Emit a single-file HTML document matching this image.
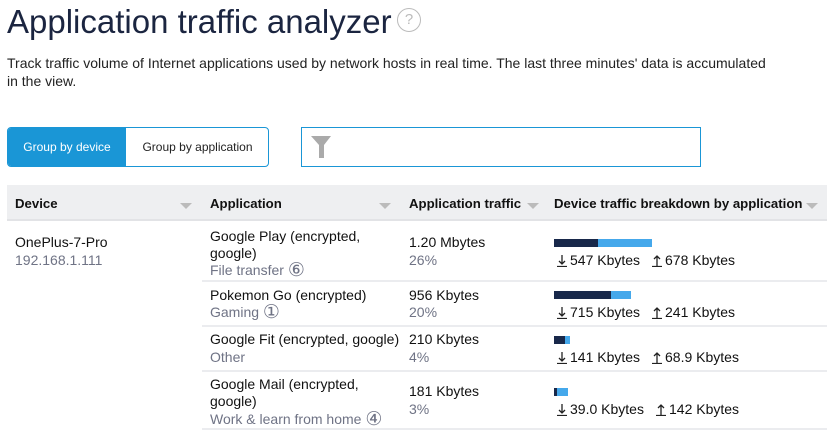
<!DOCTYPE html>
<html><head><meta charset="utf-8"><style>
*{margin:0;padding:0;box-sizing:border-box}
body{width:834px;height:434px;overflow:hidden;background:#fff;font-family:"Liberation Sans",sans-serif;color:#111;font-size:14px;position:relative}
.a{position:absolute;white-space:nowrap;line-height:17px}
.g{color:#6f7385}
.b{font-weight:bold;font-size:13.2px}
.c{font-size:19px;line-height:17px;vertical-align:-1px}
.tri{position:absolute;width:0;height:0;border-left:6px solid transparent;border-right:6px solid transparent;border-top:6px solid #bbb}
.sep{position:absolute;left:202px;width:625px;height:2px;background:#ebecef}
.bar{position:absolute;height:8px}
.d{background:#18284a}.l{background:#45a8eb}
svg.ar{vertical-align:-2px;margin-right:3px}
</style></head><body>
<div class="a" style="left:7px;top:2px;font-size:33px;line-height:40px;color:#1b2540">Application traffic analyzer</div>
<div class="a" style="left:397px;top:8px;width:24px;height:24px;border:1.5px solid #bbb;border-radius:50%;color:#bbb;font-size:15px;line-height:21px;text-align:center">?</div>
<div class="a" style="left:7px;top:54px;font-size:14px;line-height:18px;color:#222">Track traffic volume of Internet applications used by network hosts in real time. The last three minutes' data is accumulated<br>in the view.</div>
<div class="a" style="left:7px;top:127px;width:262px;height:40px;border:1px solid #1a96d6;border-radius:4px;overflow:hidden">
<div style="position:absolute;left:0;top:0;width:118px;height:38px;background:#1a96d6;color:#fff;font-size:12px;line-height:38px;text-align:center">Group by device</div>
<div style="position:absolute;left:118px;top:0;width:143px;height:38px;color:#222;font-size:12px;line-height:38px;text-align:center">Group by application</div></div>
<div class="a" style="left:301px;top:127px;width:400px;height:40px;border:1.5px solid #1a96d6">
<svg style="position:absolute;left:9px;top:8px" width="20" height="22"><path d="M0 0H20L13 9V13H8V9Z M8 13H13V22H8Z" fill="#aaa"/></svg></div>
<div class="a" style="left:7px;top:185px;width:820px;height:36px;background:#eeeff1;border-bottom:2px solid #e2e3e6"></div>
<div class="a b" style="left:15px;top:195px">Device</div>
<div class="a b" style="left:210px;top:195px">Application</div>
<div class="a b" style="left:409px;top:195px">Application traffic</div>
<div class="a b" style="left:554px;top:195px">Device traffic breakdown by application</div>
<div class="tri" style="left:180px;top:203px"></div><div class="tri" style="left:379px;top:203px"></div>
<div class="tri" style="left:527px;top:203px"></div><div class="tri" style="left:806px;top:203px"></div>
<div class="a" style="left:15px;top:234px">OnePlus-7-Pro</div>
<div class="a g" style="left:15px;top:252px">192.168.1.111</div>
<div class="a" style="left:210px;top:228px">Google Play (encrypted,<br>google)</div>
<div class="a g" style="left:210px;top:262px">File transfer <span class="c">⑥</span></div>
<div class="a" style="left:409px;top:234px">1.20 Mbytes</div><div class="a g" style="left:409px;top:252px">26%</div>
<div class="bar d" style="left:554px;top:239px;width:44px"></div><div class="bar l" style="left:598px;top:239px;width:54px"></div>
<div class="a" style="left:557px;top:252px"><svg class="ar" width="10" height="13"><path d="M5 1V10M2 7L5 10L8 7M0 12.5H10" stroke="#222" stroke-width="1.3" fill="none"/></svg>547 Kbytes</div>
<div class="a" style="left:652px;top:252px"><svg class="ar" width="10" height="13"><path d="M5 2V12M2 5L5 2L8 5M0 12.5H10" stroke="#222" stroke-width="1.3" fill="none"/></svg>678 Kbytes</div>
<div class="sep" style="top:280px"></div>
<div class="a" style="left:210px;top:287px">Pokemon Go (encrypted)</div><div class="a g" style="left:210px;top:304px">Gaming <span class="c">①</span></div>
<div class="a" style="left:409px;top:287px">956 Kbytes</div><div class="a g" style="left:409px;top:304px">20%</div>
<div class="bar d" style="left:554px;top:291px;width:57px"></div><div class="bar l" style="left:611px;top:291px;width:20px"></div>
<div class="a" style="left:557px;top:304px"><svg class="ar" width="10" height="13"><path d="M5 1V10M2 7L5 10L8 7M0 12.5H10" stroke="#222" stroke-width="1.3" fill="none"/></svg>715 Kbytes</div>
<div class="a" style="left:652px;top:304px"><svg class="ar" width="10" height="13"><path d="M5 2V12M2 5L5 2L8 5M0 12.5H10" stroke="#222" stroke-width="1.3" fill="none"/></svg>241 Kbytes</div>
<div class="sep" style="top:325px"></div>
<div class="a" style="left:210px;top:331px">Google Fit (encrypted, google)</div><div class="a g" style="left:210px;top:349px">Other</div>
<div class="a" style="left:409px;top:331px">210 Kbytes</div><div class="a g" style="left:409px;top:349px">4%</div>
<div class="bar d" style="left:554px;top:336px;width:11px"></div><div class="bar l" style="left:565px;top:336px;width:5px"></div>
<div class="a" style="left:557px;top:349px"><svg class="ar" width="10" height="13"><path d="M5 1V10M2 7L5 10L8 7M0 12.5H10" stroke="#222" stroke-width="1.3" fill="none"/></svg>141 Kbytes</div>
<div class="a" style="left:652px;top:349px"><svg class="ar" width="10" height="13"><path d="M5 2V12M2 5L5 2L8 5M0 12.5H10" stroke="#222" stroke-width="1.3" fill="none"/></svg>68.9 Kbytes</div>
<div class="sep" style="top:370px"></div>
<div class="a" style="left:210px;top:376px">Google Mail (encrypted,<br>google)</div>
<div class="a g" style="left:210px;top:411px">Work &amp; learn from home <span class="c">④</span></div>
<div class="a" style="left:409px;top:383px">181 Kbytes</div><div class="a g" style="left:409px;top:401px">3%</div>
<div class="bar d" style="left:554px;top:388px;width:3px"></div><div class="bar l" style="left:557px;top:388px;width:11px"></div>
<div class="a" style="left:557px;top:401px"><svg class="ar" width="10" height="13"><path d="M5 1V10M2 7L5 10L8 7M0 12.5H10" stroke="#222" stroke-width="1.3" fill="none"/></svg>39.0 Kbytes</div>
<div class="a" style="left:656px;top:401px"><svg class="ar" width="10" height="13"><path d="M5 2V12M2 5L5 2L8 5M0 12.5H10" stroke="#222" stroke-width="1.3" fill="none"/></svg>142 Kbytes</div>
<div class="sep" style="top:428px"></div>
</body></html>
